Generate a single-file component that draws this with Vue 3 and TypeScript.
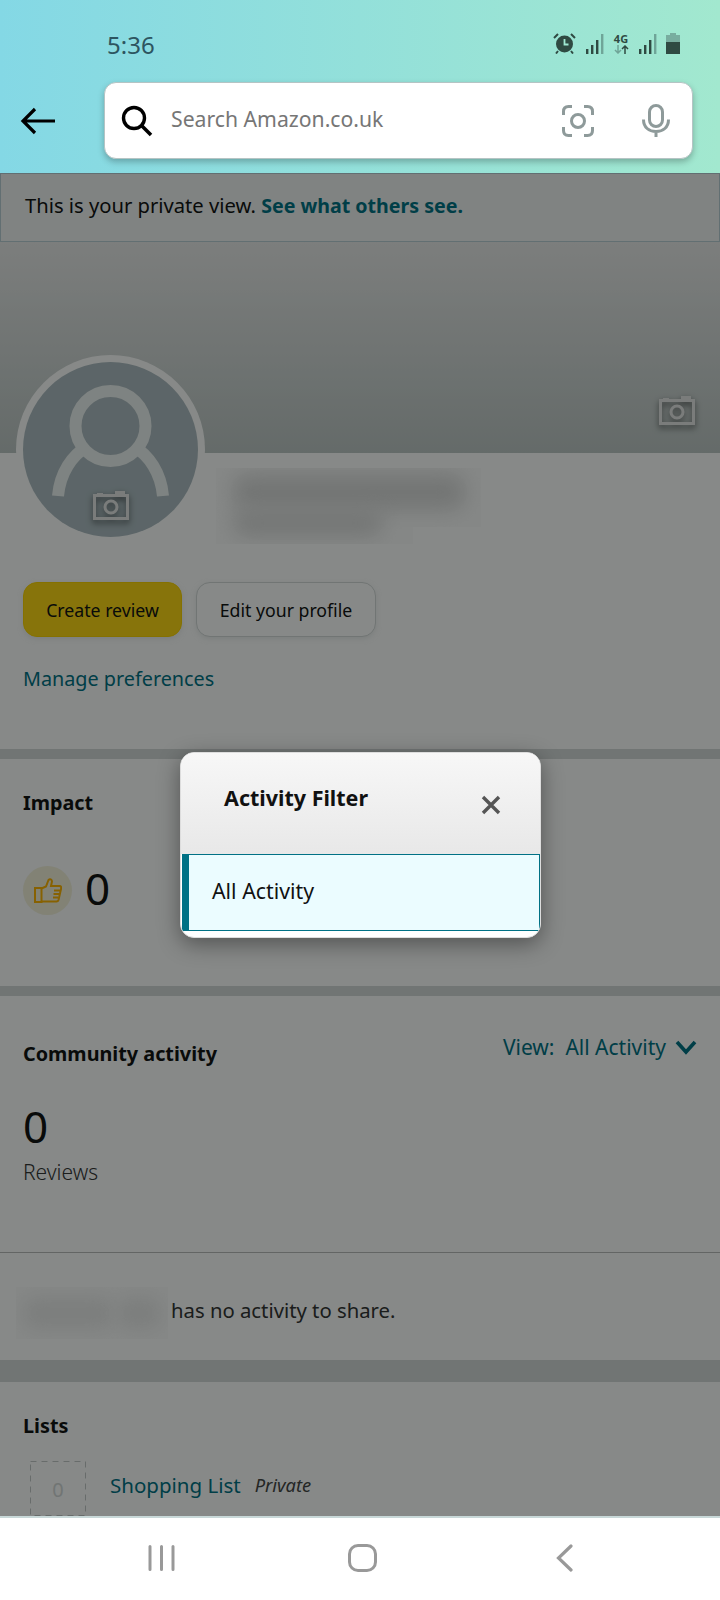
<script setup lang="ts">
const signalBars = [
  { x: 0, h: 5 },
  { x: 5, h: 9 },
  { x: 10, h: 14 },
];
</script>

<template>
  <div class="screen">
    <header class="top">
      <div class="status">
        <span class="clock">5:36</span>
        <div class="status-icons">
          <svg class="alarm" width="23" height="21" viewBox="0 0 23 21">
            <circle cx="11.5" cy="11" r="8.5" fill="#2f4a42" />
            <path d="M11.5 6v5.5h4" fill="none" stroke="#a0e8d2" stroke-width="1.8" />
            <path d="M1 5l4-4M22 5l-4-4M5 18l-2 2.5M18 18l2 2.5" stroke="#2f4a42" stroke-width="2" fill="none" />
          </svg>
          <svg class="signal" width="18" height="20" viewBox="0 0 18 20">
            <rect v-for="b in signalBars" :key="b.x" :x="b.x" :y="20 - b.h" width="2.4" :height="b.h" fill="#2f4a42" />
            <rect x="15" y="0" width="2.4" height="20" fill="#6fa598" />
          </svg>
          <div class="net">
            <span class="net-label">4G</span>
            <svg width="15" height="9" viewBox="0 0 15 9">
              <path d="M4 0v8M1 5l3 3 3-3" fill="none" stroke="#6fa598" stroke-width="1.5" />
              <path d="M11 9V1M8 4l3-3 3 3" fill="none" stroke="#2f4a42" stroke-width="1.5" />
            </svg>
          </div>
          <svg class="signal" width="18" height="20" viewBox="0 0 18 20">
            <rect v-for="b in signalBars" :key="b.x" :x="b.x" :y="20 - b.h" width="2.4" :height="b.h" fill="#2f4a42" />
            <rect x="15" y="0" width="2.4" height="20" fill="#6fa598" />
          </svg>
          <svg class="battery" width="14" height="21" viewBox="0 0 14 21">
            <path d="M4 0h6v2h4v7H0V2h4z" fill="#78ad9f" />
            <rect x="0" y="9" width="14" height="12" fill="#2f4a42" />
          </svg>
        </div>
      </div>
      <div class="search-row">
        <svg class="back" width="36" height="28" viewBox="0 0 36 28">
          <path d="M35 14H3M15 2L3 14l12 12" fill="none" stroke="#000" stroke-width="3.2" />
        </svg>
        <div class="search-box">
          <svg width="32" height="32" viewBox="0 0 32 32">
            <circle cx="13" cy="13" r="10.5" fill="none" stroke="#000" stroke-width="3.4" />
            <path d="M21 21l9 9" stroke="#000" stroke-width="3.6" />
          </svg>
          <span class="placeholder">Search Amazon.co.uk</span>
          <svg class="lens" width="32" height="32" viewBox="0 0 32 32">
            <path d="M10 1.5H6.500Q1.500 1.500 1.500 6.500V10M22 1.500H25.500Q30.500 1.500 30.500 6.500V10M10 30.500H6.500Q1.500 30.500 1.500 25.500V22M22 30.500H25.500Q30.500 30.500 30.500 25.500V22" fill="none" stroke="#8e9a9a" stroke-width="3" />
            <circle cx="16" cy="16" r="6.500" fill="none" stroke="#8e9a9a" stroke-width="3" />
          </svg>
          <svg class="mic" width="28" height="33" viewBox="0 0 28 33">
            <rect x="7.500" y="1.500" width="13" height="21" rx="6.500" fill="none" stroke="#8e9a9a" stroke-width="3" />
            <path d="M1.500 15.500c0 8 5.500 12 12.500 12s12.500-4 12.500-12M14 27v6" fill="none" stroke="#8e9a9a" stroke-width="3" />
          </svg>
        </div>
      </div>
    </header>

    <main class="page">
      <div class="banner">This is your private view. <b class="banner-link">See what others see.</b></div>
      <div class="hero">
        <svg class="camera hero-camera" width="36" height="30" viewBox="0 0 36 30">
          <path d="M4 5V3h6v2M22 5V1h10v4" fill="#e6e6e6" />
          <rect x="1.500" y="5.500" width="33" height="23" fill="none" stroke="#e6e6e6" stroke-width="3" />
          <circle cx="18" cy="17" r="6" fill="none" stroke="#e6e6e6" stroke-width="3" />
        </svg>
      </div>

      <section class="profile">
        <div class="profile-top">
          <div class="avatar">
            <svg width="175" height="175" viewBox="0 0 175 175">
              <circle cx="87.500" cy="64" r="35" fill="none" stroke="#eff3f3" stroke-width="12" />
              <path d="M35 134c2-23 14-41 30-50M140 134c-2-23-14-41-30-50" fill="none" stroke="#eff3f3" stroke-width="12" />
            </svg>
            <svg class="camera avatar-camera" width="36" height="30" viewBox="0 0 36 30">
              <path d="M4 5V3h6v2M22 5V1h10v4" fill="#e6e6e6" />
              <rect x="1.500" y="5.500" width="33" height="23" fill="none" stroke="#e6e6e6" stroke-width="3" />
              <circle cx="18" cy="17" r="6" fill="none" stroke="#e6e6e6" stroke-width="3" />
            </svg>
          </div>
          <div class="name-blur">
            <div class="blur-line first"></div>
            <div class="blur-line second"></div>
          </div>
        </div>
        <div class="actions">
          <button class="btn primary">Create review</button>
          <button class="btn">Edit your profile</button>
        </div>
        <a class="link manage">Manage preferences</a>
      </section>

      <section class="impact">
        <h2 class="heading">Impact</h2>
        <div class="impact-row">
          <span class="thumb">
            <svg width="28" height="25" viewBox="0 0 28 25">
              <path d="M1 10h6.500v14H1zM7.500 10.500l4.500-2 2.500-6.500c1.500-1.500 3.500-.5 3.500 1.500l-1 4.500h8.500c2 0 2 2 1.500 3l-2.500 11c-.3 1-1 1.500-2 1.500H7.500M20 12.500h6M19.500 16h5.500M19 19.500h5" fill="none" stroke="#ffb300" stroke-width="2" />
            </svg>
          </span>
          <span class="big impact-count">0</span>
        </div>
      </section>

      <section class="community">
        <div class="community-head">
          <h2 class="heading offset">Community activity</h2>
          <a class="link view">
            <span>View:&nbsp; All Activity</span>
            <svg width="22" height="15" viewBox="0 0 22 15">
              <path d="M2 2l9 10 9-10" fill="none" stroke="#007185" stroke-width="3.600" />
            </svg>
          </a>
        </div>
        <div class="big reviews-count">0</div>
        <div class="reviews-label">Reviews</div>
      </section>

      <section class="share">
        <div class="share-name">
          <div class="share-blob wide"></div>
          <div class="share-blob"></div>
        </div>
        <span class="share-text">has no activity to share.</span>
      </section>

      <section class="lists">
        <h2 class="heading">Lists</h2>
        <div class="list-row">
          <div class="list-thumb">
            <svg class="list-dash" width="56" height="55" viewBox="0 0 56 55">
              <rect x="0.500" y="0.500" width="55" height="54" fill="none" stroke="#c4c8c8" stroke-dasharray="6 5" />
            </svg>
            0
          </div>
          <a class="link list-name">Shopping List</a>
          <span class="list-private">Private</span>
        </div>
      </section>

      <div class="scrim">
        <div class="modal">
          <div class="modal-head">
            <span class="modal-title">Activity Filter</span>
            <svg class="modal-close" width="20" height="20" viewBox="0 0 20 20">
              <path d="M2 2l16 16M18 2L2 18" stroke="#555" stroke-width="3.400" />
            </svg>
          </div>
          <div class="modal-item">All Activity</div>
        </div>
      </div>
    </main>

    <nav class="nav">
      <svg class="nav-recent" width="27" height="26" viewBox="0 0 27 26">
        <path d="M2 1.500v23M13.500 1.500v23M25 1.500v23" stroke="#999" stroke-width="3" stroke-linecap="round" />
      </svg>
      <div class="nav-home"></div>
      <svg class="nav-back" width="17" height="28" viewBox="0 0 17 28">
        <path d="M15 2L2.500 14 15 26" fill="none" stroke="#999" stroke-width="3.200" stroke-linecap="round" />
      </svg>
    </nav>
  </div>
</template>

<style>
html,
body {
  margin: 0;
  background: #fff;
}
</style>

<style scoped>
.screen {
  width: 720px;
  height: 1600px;
  display: flex;
  flex-direction: column;
  overflow: hidden;
  font-family: "Noto Sans", sans-serif;
  font-size: 20px;
  color: #111;
  background: #fff;
}

.top {
  height: 173px;
  flex: none;
  box-sizing: border-box;
  background: linear-gradient(90deg, #84d8e5, #a2e8cf);
}

.status {
  height: 82px;
  box-sizing: border-box;
  padding: 33px 40px 0 107px;
  display: flex;
  justify-content: space-between;
}

.clock {
  font-size: 24px;
  line-height: 24px;
  color: #2d5560;
}

.status-icons {
  display: flex;
  align-items: flex-start;
  height: 22px;
}

.signal {
  margin: 1px 0 0 10px;
}

.net {
  display: flex;
  flex-direction: column;
  align-items: center;
  width: 16px;
  margin-left: 9px;
}

.net-label {
  font-size: 11px;
  line-height: 12px;
  font-weight: 700;
  color: #2f4a42;
}

.battery {
  margin-left: 9px;
}

.search-row {
  display: flex;
  align-items: center;
  padding-left: 20px;
}

.search-box {
  width: 589px;
  height: 77px;
  margin-left: 48px;
  box-sizing: border-box;
  padding: 0 22px 0 16px;
  display: flex;
  align-items: center;
  background: #fff;
  border-radius: 12px;
  border: 1px solid #b5c4c4;
  box-shadow: 0 3px 6px rgba(0, 0, 0, 0.25);
}

.placeholder {
  margin: 0 0 5px 18px;
  font-size: 21.2px;
  color: #767676;
}

.lens {
  margin-left: auto;
}

.mic {
  margin-left: 48px;
}

.page {
  flex: 1;
  position: relative;
  overflow: hidden;
}

.banner {
  height: 69px;
  box-sizing: border-box;
  padding-left: 24px;
  font-size: 20.2px;
  line-height: 63px;
  background: #f1f3f3;
  border: 1px solid #b9cfd6;
  white-space: pre-wrap;
}

.banner-link {
  color: #007185;
  font-size: 19.6px;
  font-weight: 700;
}

.hero {
  height: 211px;
  position: relative;
  background: linear-gradient(180deg, #eaeaea, #bec6c5);
}

.camera {
  position: absolute;
  filter: drop-shadow(0 3px 3px rgba(0, 0, 0, 0.55));
}

.hero-camera {
  left: 659px;
  top: 153px;
}

.profile {
  height: 296px;
  box-sizing: border-box;
  padding: 0 23px;
}

.profile-top {
  display: flex;
  height: 129px;
}

.avatar {
  width: 175px;
  height: 175px;
  margin-top: -91px;
  flex: none;
  position: relative;
  background: #aebcc2;
  border-radius: 50%;
  box-shadow: 0 0 0 7px #fff;
}

.avatar > svg:first-child {
  display: block;
}

.avatar-camera {
  left: 70px;
  top: 128px;
}

.name-blur {
  margin: 15px 0 0 18px;
  width: 265px;
  height: 76px;
  overflow: hidden;
  background: #fcfcfc;
  clip-path: polygon(0 0, 100% 0, 100% 59px, 197px 59px, 197px 100%, 0 100%);
  display: flex;
  flex-direction: column;
  padding: 6px 0 0 17px;
  box-sizing: border-box;
}

.blur-line {
  background: #dadada;
  border-radius: 14px;
  filter: blur(10px);
}

.first {
  width: 232px;
  height: 36px;
}

.second {
  width: 150px;
  height: 26px;
}

.actions {
  display: flex;
  gap: 14px;
}

.btn {
  height: 55px;
  padding: 0;
  width: 180px;
  box-sizing: border-box;
  font: inherit;
  font-size: 17.7px;
  color: #111;
  background: #fff;
  border: 1px solid #d5d9d9;
  border-radius: 14px;
  box-shadow: 0 2px 5px rgba(213, 217, 217, 0.5);
}

.primary {
  width: 159px;
  background: #ffd814;
  border-color: #fcd200;
}

.link {
  color: #007185;
}

.manage {
  display: block;
  margin-top: 30px;
  font-size: 19.8px;
  line-height: 24px;
}

.impact,
.community,
.lists {
  border-top: 10px solid #d5d9d9;
}

.impact {
  height: 237px;
  box-sizing: border-box;
  padding: 32px 23px 0;
}

.heading {
  margin: 0;
  font-size: 19.8px;
  line-height: 24px;
  font-weight: 700;
}

.impact-row {
  display: flex;
  align-items: center;
  margin-top: 51px;
  gap: 13px;
}

.impact-count {
  margin-top: -6px;
}

.thumb {
  width: 49px;
  height: 49px;
  border-radius: 50%;
  display: flex;
  align-items: center;
  justify-content: center;
  background: #f5f2dc;
}

.big {
  font-size: 44px;
  line-height: 48px;
}

.community {
  box-sizing: border-box;
  height: 267px;
  padding: 39px 23px 0;
  border-bottom: 1px solid #bbb;
}

.community-head {
  display: flex;
  justify-content: space-between;
  align-items: flex-start;
}

.offset {
  margin-top: 7px;
}

.view {
  display: flex;
  align-items: center;
  gap: 9px;
  font-size: 21px;
  line-height: 24px;
}

.reviews-count {
  margin-top: 36px;
}

.reviews-label {
  margin-top: 10px;
  font-size: 21px;
  line-height: 24px;
  font-weight: 300;
  color: #333;
}

.share {
  height: 107px;
  box-sizing: border-box;
  padding: 34px 0 0 16px;
  display: flex;
  gap: 3px;
  align-items: flex-start;
}

.share-name {
  width: 152px;
  height: 52px;
  overflow: hidden;
  background: #fcfcfc;
  padding: 9px 6px;
  box-sizing: border-box;
  display: flex;
  gap: 2px;
}

.share-blob {
  flex: 1;
  height: 34px;
  border-radius: 16px;
  background: #ececec;
  filter: blur(8px);
}

.wide {
  flex: 2;
}

.share-text {
  font-size: 20.3px;
  line-height: 46px;
  color: #333;
}

.lists {
  border-top-width: 22px;
  padding: 32px 23px 0;
}

.list-row {
  display: flex;
  align-items: flex-start;
  margin-top: 23px;
}

.list-thumb {
  width: 56px;
  height: 55px;
  margin-left: 7px;
  position: relative;
  color: #d5d9d9;
  font-size: 20px;
  line-height: 58px;
  text-align: center;
}

.list-dash {
  position: absolute;
  left: 0;
  top: 0;
}

.list-name {
  margin: 12px 0 0 24px;
  font-size: 20.5px;
  line-height: 24px;
}

.list-private {
  margin: 12px 0 0 14px;
  font-size: 18.3px;
  line-height: 24px;
  font-style: italic;
  color: #444;
}

.scrim {
  position: absolute;
  inset: 0;
  background: rgba(0, 4, 2, 0.47);
}

.modal {
  position: absolute;
  left: 180px;
  top: 579px;
  width: 361px;
  height: 186px;
  box-sizing: border-box;
  border: 1px solid #ddd;
  border-radius: 14px;
  overflow: hidden;
  background: #fff;
  box-shadow: 0 6px 22px rgba(0, 0, 0, 0.4);
}

.modal-head {
  height: 101px;
  position: relative;
  background: linear-gradient(180deg, #f7f7f7, #e8e8e8);
}

.modal-title {
  position: absolute;
  left: 43px;
  top: 33px;
  font-size: 21.5px;
  line-height: 24px;
  font-weight: 700;
}

.modal-close {
  position: absolute;
  left: 300px;
  top: 42px;
}

.modal-item {
  height: 77px;
  margin-left: 1px;
  box-sizing: border-box;
  padding-left: 23px;
  font-size: 21.3px;
  line-height: 71px;
  background: #ebfcff;
  border: 1px solid #007185;
  border-left-width: 7px;
}

.nav {
  height: 84px;
  flex: none;
  box-sizing: border-box;
  border-top: 2px solid #c8d8d8;
  padding: 26px 0 0 148px;
  display: flex;
  align-items: flex-start;
  background: #fff;
}

.nav-recent {
  margin-top: 1px;
}

.nav-home {
  width: 29px;
  height: 28px;
  margin-left: 173px;
  box-sizing: border-box;
  border: 3px solid #999;
  border-radius: 10px;
}

.nav-back {
  margin-left: 179px;
}
</style>
